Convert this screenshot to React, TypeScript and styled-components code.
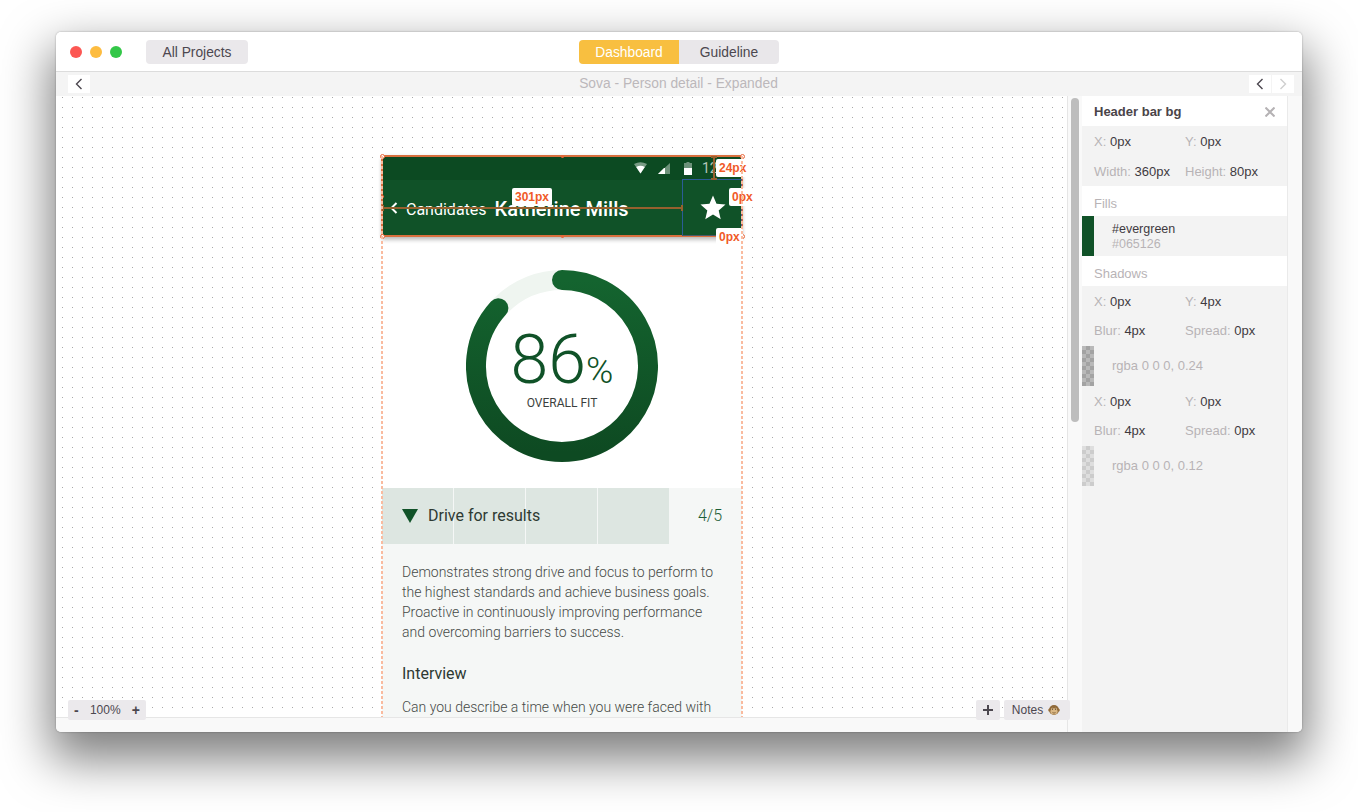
import React from "react";
import styled, { createGlobalStyle } from "styled-components";

const GlobalStyle = createGlobalStyle`
  html, body {
    margin: 0;
    padding: 0;
    background: #fff;
    overflow: hidden;
  }
  body {
    font-family: "Liberation Sans", Arial, sans-serif;
  }
`;

const Page = styled.div`
  width: 1358px;
  height: 812px;
  box-sizing: border-box;
  padding: 32px 56px 0;
  overflow: hidden;
`;

const Window = styled.div`
  width: 1246px;
  height: 700px;
  display: flex;
  flex-direction: column;
  border-radius: 5px;
  background: #f9f9f9;
  overflow: hidden;
  box-shadow: 0 22px 48px 6px rgba(0, 0, 0, 0.5), 0 0 2px rgba(0, 0, 0, 0.35);
`;

const TitleBar = styled.div`
  position: relative;
  flex: none;
  height: 39px;
  display: flex;
  align-items: center;
  padding: 0 0 0 14px;
  background: #fff;
  border-bottom: 1px solid #dcdcdc;
`;

const Lights = styled.div`
  display: flex;
  gap: 8px;
  margin-right: 24px;
`;

const Light = styled.span<{ $color: string }>`
  width: 12px;
  height: 12px;
  border-radius: 50%;
  background: ${(p) => p.$color};
`;

const ProjectsButton = styled.div`
  width: 102px;
  height: 24px;
  line-height: 25px;
  text-align: center;
  font-size: 13.8px;
  color: #4c474f;
  background: #eae8eb;
  border-radius: 4px;
`;

const Tabs = styled.div`
  display: flex;
  margin-left: 331px;
  border-radius: 4px;
  overflow: hidden;
`;

const Tab = styled.div<{ $active?: boolean }>`
  width: 100px;
  height: 24px;
  line-height: 25px;
  text-align: center;
  font-size: 13.8px;
  color: ${(p) => (p.$active ? "#fff" : "#4c474f")};
  background: ${(p) => (p.$active ? "#f8bf40" : "#e9e7ea")};
`;

const SubBar = styled.div`
  flex: none;
  height: 24px;
  display: flex;
  align-items: center;
  padding: 0 8px 0 12px;
  background: #f4f4f4;
`;

const SubTitle = styled.div`
  flex: 1;
  text-align: center;
  font-size: 13.8px;
  line-height: 24px;
  color: #bcb8bb;
  padding-left: 18px;
`;

const NavGroup = styled.div`
  display: flex;
  gap: 1px;
`;

const NavButton = styled.div`
  width: 22px;
  height: 18px;
  display: flex;
  align-items: center;
  justify-content: center;
  background: #fff;
`;

const Main = styled.div`
  flex: 1;
  min-height: 0;
  display: flex;
`;

const CanvasColumn = styled.div`
  position: relative;
  width: 1011px;
  display: flex;
  flex-direction: column;
  border-right: 1px solid #e6e6e6;
  box-sizing: content-box;
`;

const Canvas = styled.div`
  flex: 1;
  min-height: 0;
  overflow: hidden;
  padding: 60px 0 0 326px;
  background-color: #fff;
  background-image: radial-gradient(circle at 0.5px 0.5px, #a8a8a8 0.7px, transparent 0.7px);
  background-size: 10px 10px;
  background-position: 6px 1px;
`;

const BottomStrip = styled.div`
  flex: none;
  height: 14px;
  background: #f9f9f9;
  border-top: 1px solid #e6e6e6;
`;

const ZoomBox = styled.div`
  position: absolute;
  left: 12px;
  bottom: 12px;
  width: 78px;
  height: 20px;
  box-sizing: border-box;
  padding: 0 6px;
  display: flex;
  align-items: center;
  justify-content: space-between;
  font-size: 12px;
  color: #4c474f;
  background: #ebe9ec;
  border-radius: 2px;
`;

const ZoomSign = styled.span`
  font-size: 14px;
  font-weight: 700;
`;

const CanvasActions = styled.div`
  position: absolute;
  right: -3px;
  bottom: 12px;
  display: flex;
  gap: 4px;
`;

const PlusButton = styled.div`
  width: 24px;
  height: 20px;
  display: flex;
  align-items: center;
  justify-content: center;
  background: #ebe9ec;
  border-radius: 2px;
`;

const NotesButton = styled.div`
  width: 66px;
  height: 20px;
  box-sizing: border-box;
  padding-right: 2px;
  display: flex;
  align-items: center;
  justify-content: center;
  gap: 5px;
  font-size: 12px;
  color: #4c474f;
  background: #ebe9ec;
  border-radius: 2px;
`;

const Phone = styled.div`
  position: relative;
  width: 360px;
  font-family: Roboto, "Liberation Sans", sans-serif;
  background: #fff;

  &::before,
  &::after {
    content: "";
    position: absolute;
    top: 0;
    bottom: 0;
    width: 2px;
    background: repeating-linear-gradient(to bottom, #fabb9f 0 3px, transparent 3px 5px);
    z-index: 3;
  }
  &::before {
    left: -1px;
  }
  &::after {
    right: -1px;
  }
`;

const PhoneHeader = styled.div`
  position: relative;
  z-index: 1;
  box-shadow: 0 4px 4px rgba(0, 0, 0, 0.24), 0 0 4px rgba(0, 0, 0, 0.12);
  background: #105228;
`;

const StatusBar = styled.div`
  height: 24px;
  display: flex;
  align-items: center;
  gap: 11px;
  padding-left: 252px;
  background: #0c4a22;
  overflow: hidden;

  svg:nth-child(3) {
    margin-left: 3px;
  }
`;

const Clock = styled.span`
  font-size: 14px;
  color: rgba(255, 255, 255, 0.7);
  margin-left: -1px;
`;

const Toolbar = styled.div`
  height: 56px;
  display: flex;
  align-items: center;
  padding-left: 8px;
  color: #fff;
`;

const BackLabel = styled.span`
  font-size: 16px;
  font-weight: 400;
  margin: 2px 0 0 8px;
`;

const PersonName = styled.span`
  font-size: 20px;
  font-weight: 500;
  margin: 2px 0 0 8px;
`;

const StarCell = styled.div`
  margin-left: auto;
  width: 59px;
  height: 56px;
  display: flex;
  align-items: center;
  justify-content: center;
`;

const ScoreArea = styled.div`
  height: 252px;
  display: flex;
  align-items: center;
  justify-content: center;
`;

const Ring = styled.div`
  position: relative;
  width: 192px;
  height: 192px;
  margin-top: 8px;
`;

const RingLabel = styled.div`
  position: absolute;
  inset: 0;
  display: flex;
  flex-direction: column;
  align-items: center;
  padding-top: 56px;
  box-sizing: border-box;
`;

const ScoreValue = styled.div`
  display: flex;
  align-items: baseline;
  color: #105228;
  font-weight: 300;
  font-size: 68px;
  line-height: 68px;
`;

const ScoreUnit = styled.span`
  font-size: 37px;
  line-height: 37px;
  font-weight: 300;
`;

const ScoreCaption = styled.div`
  margin-top: 2px;
  font-size: 12px;
  color: #3c3f3d;
`;

const Detail = styled.div`
  background: #f5f7f6;
  height: 240px;
`;

const CompetencyRow = styled.div`
  position: relative;
  height: 56px;
  display: flex;
  align-items: center;
  padding: 0 20px;
`;

const ScoreBar = styled.div`
  position: absolute;
  inset: 0 auto 0 0;
  display: grid;
  grid-template-columns: repeat(4, 72px);
  width: 287px;
  overflow: hidden;
`;

const ScoreSegment = styled.div`
  background: #dde6e1;
  border-right: 1px solid #f5f7f6;
  &:last-child {
    border-right: 0;
  }
`;

const CompetencyName = styled.span`
  position: relative;
  margin: 0 0 2px 10px;
  font-size: 16px;
  color: #2e3a33;
`;

const CompetencyScore = styled.span`
  position: relative;
  margin: 0 0 2px auto;
  font-size: 16px;
  font-weight: 300;
  color: #1d5e36;
`;

const DetailBody = styled.div`
  padding: 18px 20px 0;
`;

const Paragraph = styled.p`
  margin: 0;
  font-size: 14px;
  font-weight: 300;
  line-height: 20px;
  color: #464a47;
`;

const SubHeading = styled.h3`
  margin: 22px 0 13px;
  font-size: 16px;
  font-weight: 400;
  line-height: 20px;
  color: #2e3a33;
`;

const Selection = styled.div`
  position: absolute;
  left: -1px;
  top: -1px;
  width: 362px;
  height: 82px;
  box-sizing: border-box;
  border: 2px solid #d9703e;
  z-index: 4;
`;

const Handle = styled.i<{ $x: number; $y: number; $small?: boolean }>`
  position: absolute;
  left: ${(p) => p.$x}px;
  top: ${(p) => p.$y}px;
  width: ${(p) => (p.$small ? 3 : 5)}px;
  height: ${(p) => (p.$small ? 3 : 5)}px;
  margin: ${(p) => (p.$small ? -1.5 : -2.5)}px;
  box-sizing: border-box;
  border-radius: 50%;
  background: ${(p) => (p.$small ? "#e8663a" : "#fff")};
  border: ${(p) => (p.$small ? "0" : "1px solid #e8663a")};
`;

const TargetBox = styled.div`
  position: absolute;
  left: 300px;
  top: 23px;
  width: 60px;
  height: 57px;
  box-sizing: border-box;
  border: 1px solid #2b5c96;
  border-right-color: #6a5a8a;
  border-bottom-color: #4a5a6a;
  z-index: 4;
`;

const Measure = styled.div<{ $vertical?: boolean }>`
  position: absolute;
  background: #96602e;
  z-index: 5;
  ${(p) =>
    p.$vertical
      ? "left: 331px; top: 0; width: 2px; height: 24px;"
      : "left: 0; top: 51px; width: 301px; height: 2px;"}

  &::before,
  &::after {
    content: "";
    position: absolute;
    background: #96602e;
    ${(p) =>
      p.$vertical
        ? "left: -2px; width: 6px; height: 2px;"
        : "top: -2px; width: 2px; height: 6px;"}
  }
  &::before {
    left: ${(p) => (p.$vertical ? "-2px" : "0")};
    top: ${(p) => (p.$vertical ? "0" : "-2px")};
  }
  &::after {
    ${(p) => (p.$vertical ? "bottom: 0;" : "right: 0;")}
  }
`;

const MeasureLabel = styled.div<{ $x: number; $y: number }>`
  position: absolute;
  left: ${(p) => p.$x}px;
  top: ${(p) => p.$y}px;
  height: 18px;
  line-height: 18px;
  padding: 0 3px;
  font-family: "Liberation Sans", Arial, sans-serif;
  font-size: 12px;
  font-weight: 700;
  color: #f05a28;
  background: #fff;
  border-radius: 2px;
  z-index: 6;
`;

const ScrollLane = styled.div`
  flex: none;
  width: 14px;
  padding: 2px 0 0 3px;
  box-sizing: border-box;
  background: #f9f9f9;
`;

const ScrollThumb = styled.div`
  width: 8px;
  height: 324px;
  border-radius: 4px;
  background: #bdbdbd;
`;

const Panel = styled.div`
  flex: none;
  width: 205px;
  background: #f3f3f3;
  border-right: 1px solid #eaeaea;
  font-size: 13px;
  color: #3f3a3f;
`;

const PanelHeader = styled.div`
  height: 30px;
  display: flex;
  align-items: center;
  justify-content: space-between;
  padding: 1px 12px 0;
  box-sizing: border-box;
  background: #fff;
`;

const PanelTitle = styled.div`
  font-weight: 700;
  color: #4a4448;
`;

const PropRow = styled.div<{ $flush?: boolean }>`
  height: 30px;
  display: grid;
  grid-template-columns: 91px 1fr;
  align-items: center;
  padding: ${(p) => (p.$flush ? "0 0 1px 12px" : "1px 0 0 12px")};
  box-sizing: border-box;
`;

const PropLabel = styled.span`
  color: #b8b3b6;
`;

const SectionLabel = styled.div`
  height: 30px;
  line-height: 35px;
  padding-left: 12px;
  color: #b8b3b6;
  background: #fff;
`;

const SwatchRow = styled.div`
  height: 40px;
  display: flex;
  align-items: center;
`;

const Swatch = styled.div<{ $dark: string; $light: string }>`
  flex: none;
  width: 12px;
  height: 40px;
  margin-right: 18px;
  background: repeating-conic-gradient(${(p) => p.$dark} 0 25%, ${(p) => p.$light} 0 50%) 0 0 / 8px 8px;
`;

const FillText = styled.div`
  padding-top: 2px;
`;

const FillName = styled.div`
  font-size: 12.5px;
  line-height: 15px;
`;

const FillHex = styled.div`
  font-size: 12.5px;
  line-height: 15px;
  color: #b8b3b6;
`;

const ShadowColor = styled.div`
  margin-bottom: 2px;
  color: #b8b3b6;
`;

const RightRail = styled.div`
  flex: 1;
  background: #f9f9f9;
`;

const Chevron = ({
  dir = "left",
  color = "#4c474f",
  weight = 1.4,
}: {
  dir?: "left" | "right";
  color?: string;
  weight?: number;
}) => (
  <svg width="8" height="12" viewBox="0 0 8 12">
    <path
      d={dir === "left" ? "M6.5 1 L1.5 6 L6.5 11" : "M1.5 1 L6.5 6 L1.5 11"}
      fill="none"
      stroke={color}
      strokeWidth={weight}
    />
  </svg>
);

const MonkeyFace = () => (
  <svg width="12" height="12" viewBox="0 0 12 12">
    <circle cx="1.6" cy="6" r="1.5" fill="#a87f4a" />
    <circle cx="10.4" cy="6" r="1.5" fill="#a87f4a" />
    <circle cx="6" cy="6" r="5" fill="#8f6a3a" />
    <ellipse cx="6" cy="7.4" rx="3.6" ry="3" fill="#d9b683" />
    <circle cx="4.4" cy="5" r="1.3" fill="#d9b683" />
    <circle cx="7.6" cy="5" r="1.3" fill="#d9b683" />
    <circle cx="4.5" cy="5.1" r="0.6" fill="#33261a" />
    <circle cx="7.5" cy="5.1" r="0.6" fill="#33261a" />
    <path d="M4.4 8.6 Q6 9.6 7.6 8.6" fill="none" stroke="#6b4a24" strokeWidth="0.7" />
  </svg>
);

const WifiIcon = () => (
  <svg width="13" height="12" viewBox="0 0 13 12">
    <path d="M0 2 Q6.5 -1.5 13 2 L6.5 11.5 Z" fill="rgba(255,255,255,0.45)" />
    <path d="M2.2 5 Q6.5 2.4 10.8 5 L6.5 11.5 Z" fill="#fff" />
  </svg>
);

const SignalIcon = () => (
  <svg width="12" height="11" viewBox="0 0 12 11">
    <path d="M12 0 V11 H0 Z" fill="rgba(255,255,255,0.4)" />
    <path d="M7 5 V11 H0 L6 5 Z" fill="#fff" />
  </svg>
);

const BatteryIcon = () => (
  <svg width="8" height="13" viewBox="0 0 8 13">
    <path d="M2.5 0 H5.5 V1 H8 V13 H0 V1 H2.5 Z" fill="rgba(255,255,255,0.4)" />
    <path d="M0 6 H8 V13 H0 Z" fill="#fff" />
  </svg>
);

const ProgressRing = () => {
  const r = 86;
  const circumference = 2 * Math.PI * r;
  const filled = (312 / 360) * circumference;
  return (
    <svg width="192" height="192" viewBox="0 0 192 192">
      <defs>
        <linearGradient id="ringFill" x1="0" y1="0" x2="0" y2="1">
          <stop offset="0" stopColor="#14642f" />
          <stop offset="1" stopColor="#0e4a22" />
        </linearGradient>
      </defs>
      <circle cx="96" cy="96" r={r} fill="none" stroke="#eff5f0" strokeWidth="20" />
      <path
        d="M96 10 A86 86 0 1 1 95.99 10"
        fill="none"
        stroke="url(#ringFill)"
        strokeWidth="20"
        strokeLinecap="round"
        strokeDasharray={`${filled} ${circumference}`}
      />
    </svg>
  );
};

const PropLine = ({
  a,
  av,
  b,
  bv,
  flush,
}: {
  a: string;
  av: string;
  b: string;
  bv: string;
  flush?: boolean;
}) => (
  <PropRow $flush={flush}>
    <span>
      <PropLabel>{a}:</PropLabel> {av}
    </span>
    <span>
      <PropLabel>{b}:</PropLabel> {bv}
    </span>
  </PropRow>
);

const App = () => {
  return (
    <Page>
      <GlobalStyle />
      <Window>
        <TitleBar>
          <Lights>
            <Light $color="#fc5753" />
            <Light $color="#fdbc40" />
            <Light $color="#33c748" />
          </Lights>
          <ProjectsButton>All Projects</ProjectsButton>
          <Tabs>
            <Tab $active>Dashboard</Tab>
            <Tab>Guideline</Tab>
          </Tabs>
        </TitleBar>
        <SubBar>
          <NavButton>
            <Chevron />
          </NavButton>
          <SubTitle>Sova - Person detail - Expanded</SubTitle>
          <NavGroup>
            <NavButton>
              <Chevron />
            </NavButton>
            <NavButton>
              <Chevron dir="right" color="#cfcfcf" />
            </NavButton>
          </NavGroup>
        </SubBar>
        <Main>
          <CanvasColumn>
            <Canvas>
              <Phone>
                <PhoneHeader>
                  <StatusBar>
                    <WifiIcon />
                    <SignalIcon />
                    <BatteryIcon />
                    <Clock>12:30</Clock>
                  </StatusBar>
                  <Toolbar>
                    <Chevron color="#fff" weight={2} />
                    <BackLabel>Candidates</BackLabel>
                    <PersonName>Katherine Mills</PersonName>
                    <StarCell>
                      <svg width="30" height="30" viewBox="0 0 24 24">
                        <path
                          fill="#fff"
                          d="M12 17.27L18.18 21l-1.64-7.03L22 9.24l-7.19-.61L12 2 9.19 8.63 2 9.24l5.46 4.73L5.82 21z"
                        />
                      </svg>
                    </StarCell>
                  </Toolbar>
                  <Selection>
                    <Handle $x={-1} $y={-1} />
                    <Handle $x={359} $y={-1} />
                    <Handle $x={-1} $y={79} />
                    <Handle $x={359} $y={79} />
                    <Handle $small $x={179} $y={-1} />
                    <Handle $small $x={179} $y={79} />
                    <Handle $small $x={-1} $y={39} />
                  </Selection>
                  <TargetBox />
                  <Measure />
                  <Measure $vertical />
                  <MeasureLabel $x={130} $y={32}>301px</MeasureLabel>
                  <MeasureLabel $x={334} $y={3}>24px</MeasureLabel>
                  <MeasureLabel $x={347} $y={32}>0px</MeasureLabel>
                  <MeasureLabel $x={334} $y={72}>0px</MeasureLabel>
                </PhoneHeader>
                <ScoreArea>
                  <Ring>
                    <ProgressRing />
                    <RingLabel>
                      <ScoreValue>
                        86<ScoreUnit>%</ScoreUnit>
                      </ScoreValue>
                      <ScoreCaption>OVERALL FIT</ScoreCaption>
                    </RingLabel>
                  </Ring>
                </ScoreArea>
                <Detail>
                  <CompetencyRow>
                    <ScoreBar>
                      <ScoreSegment />
                      <ScoreSegment />
                      <ScoreSegment />
                      <ScoreSegment />
                    </ScoreBar>
                    <svg width="16" height="14" viewBox="0 0 16 14" style={{ position: "relative" }}>
                      <path d="M0 0 H16 L8 14 Z" fill="#105228" />
                    </svg>
                    <CompetencyName>Drive for results</CompetencyName>
                    <CompetencyScore>4/5</CompetencyScore>
                  </CompetencyRow>
                  <DetailBody>
                    <Paragraph>
                      Demonstrates strong drive and focus to perform to the highest standards and achieve
                      business goals. Proactive in continuously improving performance and overcoming
                      barriers to success.
                    </Paragraph>
                    <SubHeading>Interview</SubHeading>
                    <Paragraph>Can you describe a time when you were faced with</Paragraph>
                  </DetailBody>
                </Detail>
              </Phone>
            </Canvas>
            <BottomStrip />
            <ZoomBox>
              <ZoomSign>-</ZoomSign>
              100%
              <ZoomSign>+</ZoomSign>
            </ZoomBox>
            <CanvasActions>
              <PlusButton>
                <svg width="12" height="12" viewBox="0 0 12 12">
                  <path d="M6 1 V11 M1 6 H11" stroke="#4c474f" strokeWidth="2" />
                </svg>
              </PlusButton>
              <NotesButton>
                Notes
                <MonkeyFace />
              </NotesButton>
            </CanvasActions>
          </CanvasColumn>
          <ScrollLane>
            <ScrollThumb />
          </ScrollLane>
          <Panel>
            <PanelHeader>
              <PanelTitle>Header bar bg</PanelTitle>
              <svg width="10" height="10" viewBox="0 0 10 10">
                <path d="M0.5 0.5 L9.5 9.5 M9.5 0.5 L0.5 9.5" stroke="#b5b2b4" strokeWidth="2" />
              </svg>
            </PanelHeader>
            <PropLine a="X" av="0px" b="Y" bv="0px" />
            <PropLine a="Width" av="360px" b="Height" bv="80px" />
            <SectionLabel>Fills</SectionLabel>
            <SwatchRow>
              <Swatch $dark="#105228" $light="#105228" />
              <FillText>
                <FillName>#evergreen</FillName>
                <FillHex>#065126</FillHex>
              </FillText>
            </SwatchRow>
            <SectionLabel>Shadows</SectionLabel>
            <PropLine a="X" av="0px" b="Y" bv="4px" />
            <PropLine a="Blur" av="4px" b="Spread" bv="0px" flush />
            <SwatchRow>
              <Swatch $dark="#a3a3a3" $light="#b9b9b9" />
              <ShadowColor>rgba 0 0 0, 0.24</ShadowColor>
            </SwatchRow>
            <PropLine a="X" av="0px" b="Y" bv="0px" />
            <PropLine a="Blur" av="4px" b="Spread" bv="0px" flush />
            <SwatchRow>
              <Swatch $dark="#cccccc" $light="#dedede" />
              <ShadowColor>rgba 0 0 0, 0.12</ShadowColor>
            </SwatchRow>
          </Panel>
          <RightRail />
        </Main>
      </Window>
    </Page>
  );
};

export default App;
